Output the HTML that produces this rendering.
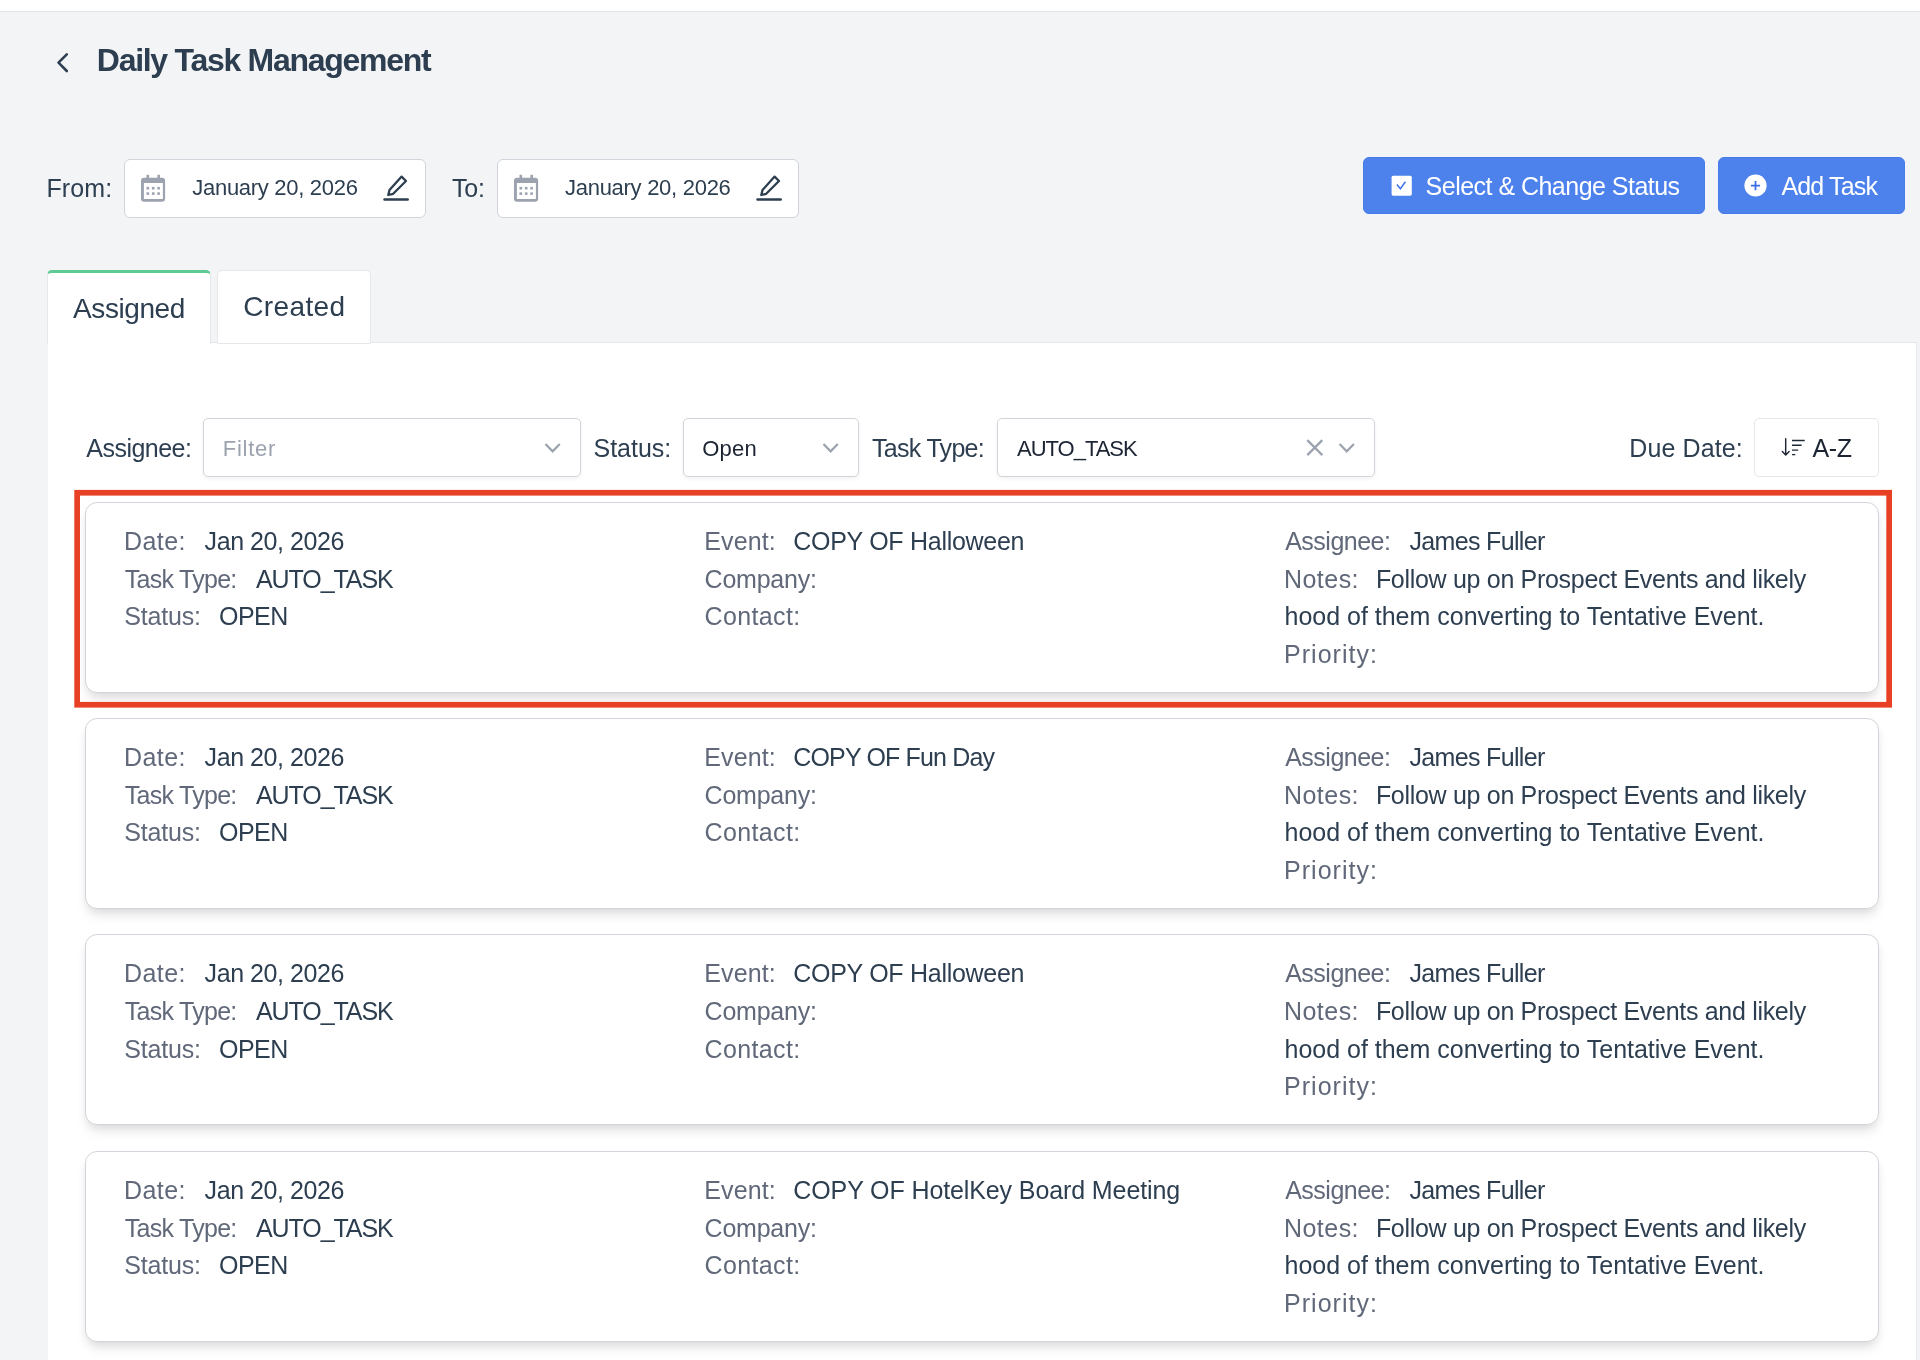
<!DOCTYPE html>
<html>
<head>
<meta charset="utf-8">
<title>Daily Task Management</title>
<style>
*{box-sizing:border-box;margin:0;padding:0}
html,body{width:1920px;height:1360px;overflow:hidden}
body{background:#f3f4f6;font-family:"Liberation Sans",sans-serif;color:#2c3e50;position:relative}
.abs{position:absolute}
svg{position:absolute;left:0;top:0;overflow:visible}
.t{position:absolute;white-space:nowrap;line-height:1}
#txt{position:absolute;left:0;top:0;width:1920px;height:1360px;will-change:transform}
#topbar{left:0;top:0;width:1920px;height:12px;background:#fff;border-bottom:1px solid #e4e4e5}
.datebox{top:159px;width:302px;height:59px;background:#fff;border:1px solid #d1d5db;border-radius:6px}
.btn{top:157px;height:57px;background:#4d82ec;border:1px solid #467cea;border-radius:6px}
.tab{background:#fff;border:1px solid #e5e7eb;border-bottom:none;border-radius:5px 5px 0 0}
#panel{left:48px;top:342px;width:1869px;height:1030px;background:#fff;border:1px solid #e5e7eb;border-left:none}
.sel{top:418px;height:59px;background:#fff;border:1px solid #d1d5db;border-radius:5px;box-shadow:0 2px 4px rgba(0,0,0,0.05)}
.card{left:85px;width:1794px;height:191px;background:#fff;border:1px solid #d1d5db;border-radius:12px;box-shadow:0 8px 12px -2px rgba(0,0,0,0.10),0 4px 8px -2px rgba(0,0,0,0.06)}
</style>
</head>
<body>
<div id="topbar" class="abs"></div>
<div id="panel" class="abs"></div>

<!-- date boxes -->
<div class="abs datebox" style="left:124px"></div>
<div class="abs datebox" style="left:497px"></div>

<!-- buttons -->
<div class="abs btn" style="left:1363px;width:342px"></div>
<div class="abs btn" style="left:1718px;width:187px"></div>

<!-- tabs -->
<div class="abs tab" style="left:47px;top:270px;width:164px;height:74px;border-top:3px solid #5ecb95"></div>
<div class="abs tab" style="left:217px;top:270px;width:154px;height:74px;border-bottom:1px solid #e5e7eb"></div>

<!-- filters -->
<div class="abs sel" style="left:203px;width:378px"></div>
<div class="abs sel" style="left:683px;width:176px"></div>
<div class="abs sel" style="left:997px;width:378px"></div>
<div class="abs sel" style="left:1754px;width:125px;border-color:#e5e7eb;box-shadow:none"></div>

<!-- cards -->
<div class="abs card" style="top:502px"></div>
<div class="abs card" style="top:718px"></div>
<div class="abs card" style="top:934px"></div>
<div class="abs card" style="top:1151px"></div>

<!-- icons -->
<svg width="1920" height="1360" viewBox="0 0 1920 1360">
 <!-- red highlight -->
 <rect x="77.15" y="492.75" width="1812" height="212" fill="none" stroke="#e84024" stroke-width="5.7"/>
 <!-- back chevron -->
 <path d="M66.8 54.4 L58.5 62.7 L66.8 71" fill="none" stroke="#2c3e50" stroke-width="2.6" stroke-linecap="round" stroke-linejoin="round"/>
 <!-- calendar icons -->
 <g fill="#9ca3af">
  <path fill-rule="evenodd" d="M517 177.75 h18.1 a3 3 0 0 1 3 3 v18 a3 3 0 0 1 -3 3 h-18.1 a3 3 0 0 1 -3 -3 v-18 a3 3 0 0 1 3 -3 z M516.9 182.9 v16.2 h19 v-16.2 z"/>
  <rect x="519.5" y="174.8" width="2.6" height="4"/><rect x="530.4" y="174.8" width="2.6" height="4"/>
  <rect x="519.5" y="186.9" width="2.6" height="2.6"/><rect x="524.9" y="186.9" width="2.6" height="2.6"/><rect x="530.3" y="186.9" width="2.6" height="2.6"/>
  <rect x="519.5" y="192.3" width="2.6" height="2.6"/><rect x="524.9" y="192.3" width="2.6" height="2.6"/><rect x="530.3" y="192.3" width="2.6" height="2.6"/>
 </g>
 <g fill="#9ca3af" transform="translate(-373 0)">
  <path fill-rule="evenodd" d="M517 177.75 h18.1 a3 3 0 0 1 3 3 v18 a3 3 0 0 1 -3 3 h-18.1 a3 3 0 0 1 -3 -3 v-18 a3 3 0 0 1 3 -3 z M516.9 182.9 v16.2 h19 v-16.2 z"/>
  <rect x="519.5" y="174.8" width="2.6" height="4"/><rect x="530.4" y="174.8" width="2.6" height="4"/>
  <rect x="519.5" y="186.9" width="2.6" height="2.6"/><rect x="524.9" y="186.9" width="2.6" height="2.6"/><rect x="530.3" y="186.9" width="2.6" height="2.6"/>
  <rect x="519.5" y="192.3" width="2.6" height="2.6"/><rect x="524.9" y="192.3" width="2.6" height="2.6"/><rect x="530.3" y="192.3" width="2.6" height="2.6"/>
 </g>
 <!-- pencil icons -->
 <g fill="none" stroke="#2c3e50" stroke-width="2.3" stroke-linejoin="round" stroke-linecap="round">
  <path d="M774.6 176.6 L779 181 L766.2 193.8 L761.3 195 L762.5 190.1 Z"/>
  <path d="M757.5 199.6 H780.7" stroke-width="2.5"/>
 </g>
 <g fill="none" stroke="#2c3e50" stroke-width="2.3" stroke-linejoin="round" stroke-linecap="round" transform="translate(-373 0)">
  <path d="M774.6 176.6 L779 181 L766.2 193.8 L761.3 195 L762.5 190.1 Z"/>
  <path d="M757.5 199.6 H780.7" stroke-width="2.5"/>
 </g>
 <!-- checkbox icon -->
 <rect x="1391.6" y="175.7" width="20.2" height="20" rx="1.6" fill="#fff"/>
 <path d="M1396.9 184.6 L1400.4 188.7 L1405.4 181.8" fill="none" stroke="#3f74ea" stroke-width="1.5"/>
 <!-- plus circle -->
 <circle cx="1755.5" cy="185.5" r="11.1" fill="#fff"/>
 <path d="M1750.9 185.6 H1760.1 M1755.5 180.9 V190.3" fill="none" stroke="#3b6fe8" stroke-width="1.8"/>
 <!-- select chevrons -->
 <g fill="none" stroke="#9ca3af" stroke-width="2.2">
  <path d="M545.5 443.9 L552.6 451.3 L559.8 443.9"/>
  <path d="M823.5 443.9 L830.6 451.3 L837.8 443.9"/>
  <path d="M1339.6 443.9 L1346.7 451.3 L1353.9 443.9"/>
  <path d="M1307.3 440.1 L1322.3 455.1 M1322.3 440.1 L1307.3 455.1"/>
 </g>
 <!-- sort icon -->
 <g fill="none" stroke="#1f2937" stroke-width="1.45">
  <path d="M1785.7 438.8 V454.8 M1782.3 451.5 L1785.7 455.1 L1789.1 451.5" stroke-linecap="round" stroke-linejoin="round"/>
  <path d="M1792 440.4 H1804.7 M1792 445.2 H1801.6 M1792 450.1 H1798.2 M1792 454.6 H1795.3"/>
 </g>
</svg>

<div id="txt">
<div class="t" id="title" style="left:96.80px;top:43.91px;font-size:32px;letter-spacing:-1.278px;color:#2c3e50;font-weight:bold">Daily Task Management</div>
<div class="t" id="from" style="left:46.40px;top:175.84px;font-size:25px;letter-spacing:0.144px;color:#2c3e50">From:</div>
<div class="t" id="date1" style="left:192.30px;top:177.38px;font-size:22px;letter-spacing:-0.292px;color:#2c3e50">January 20, 2026</div>
<div class="t" id="to" style="left:451.90px;top:175.84px;font-size:25px;letter-spacing:-0.102px;color:#2c3e50">To:</div>
<div class="t" id="date2" style="left:565.00px;top:177.38px;font-size:22px;letter-spacing:-0.279px;color:#2c3e50">January 20, 2026</div>
<div class="t" id="btn1" style="left:1425.60px;top:173.74px;font-size:25px;letter-spacing:-0.521px;color:#fff">Select &amp; Change Status</div>
<div class="t" id="btn2" style="left:1781.40px;top:173.74px;font-size:25px;letter-spacing:-0.819px;color:#fff">Add Task</div>
<div class="t" id="tab1" style="left:73.10px;top:295.05px;font-size:28px;letter-spacing:-0.423px;color:#2c3e50">Assigned</div>
<div class="t" id="tab2" style="left:243.20px;top:293.00px;font-size:28px;letter-spacing:0.376px;color:#2c3e50">Created</div>
<div class="t" id="fassignee" style="left:86.25px;top:435.84px;font-size:25px;letter-spacing:-0.512px;color:#2c3e50">Assignee:</div>
<div class="t" id="ffilter" style="left:222.75px;top:437.63px;font-size:22px;letter-spacing:0.738px;color:#9ca3af">Filter</div>
<div class="t" id="fstatus" style="left:593.50px;top:435.84px;font-size:25px;letter-spacing:-0.021px;color:#2c3e50">Status:</div>
<div class="t" id="fopen" style="left:702.25px;top:437.63px;font-size:22px;letter-spacing:0.222px;color:#1c2434">Open</div>
<div class="t" id="ftasktype" style="left:872.00px;top:435.84px;font-size:25px;letter-spacing:-0.700px;color:#2c3e50">Task Type:</div>
<div class="t" id="fauto" style="left:1017.00px;top:437.63px;font-size:22px;letter-spacing:-1.013px;color:#1c2434">AUTO_TASK</div>
<div class="t" id="fdue" style="left:1629.30px;top:435.84px;font-size:25px;letter-spacing:0.111px;color:#2c3e50">Due Date:</div>
<div class="t" id="faz" style="left:1812.50px;top:435.84px;font-size:25px;letter-spacing:-0.400px;color:#1c2434">A-Z</div>
<div class="t" id="c1l1" style="left:124.00px;top:528.84px;font-size:25px;letter-spacing:0.423px;color:#606879">Date:</div>
<div class="t" id="c1v1" style="left:204.60px;top:528.84px;font-size:25px;letter-spacing:-0.433px;color:#2c3e50">Jan 20, 2026</div>
<div class="t" id="c1l2" style="left:124.80px;top:566.84px;font-size:25px;letter-spacing:-0.728px;color:#606879">Task Type:</div>
<div class="t" id="c1v2" style="left:256.00px;top:566.84px;font-size:25px;letter-spacing:-1.083px;color:#2c3e50">AUTO_TASK</div>
<div class="t" id="c1l3" style="left:124.30px;top:604.24px;font-size:25px;letter-spacing:-0.196px;color:#606879">Status:</div>
<div class="t" id="c1v3" style="left:219.00px;top:604.24px;font-size:25px;letter-spacing:-0.498px;color:#2c3e50">OPEN</div>
<div class="t" id="c1l4" style="left:704.25px;top:528.84px;font-size:25px;letter-spacing:0.114px;color:#606879">Event:</div>
<div class="t" id="c1v4" style="left:793.30px;top:528.84px;font-size:25px;letter-spacing:-0.287px;color:#2c3e50">COPY OF Halloween</div>
<div class="t" id="c1l5" style="left:704.60px;top:566.84px;font-size:25px;letter-spacing:-0.228px;color:#606879">Company:</div>
<div class="t" id="c1l6" style="left:704.60px;top:604.24px;font-size:25px;letter-spacing:0.363px;color:#606879">Contact:</div>
<div class="t" id="c1l7" style="left:1285.20px;top:528.84px;font-size:25px;letter-spacing:-0.506px;color:#606879">Assignee:</div>
<div class="t" id="c1v7" style="left:1409.40px;top:528.84px;font-size:25px;letter-spacing:-0.651px;color:#2c3e50">James Fuller</div>
<div class="t" id="c1l8" style="left:1284.00px;top:566.84px;font-size:25px;letter-spacing:0.458px;color:#606879">Notes:</div>
<div class="t" id="c1v8" style="left:1375.90px;top:566.84px;font-size:25px;letter-spacing:-0.305px;color:#2c3e50">Follow up on Prospect Events and likely</div>
<div class="t" id="c1v9" style="left:1284.50px;top:604.24px;font-size:25px;letter-spacing:-0.010px;color:#2c3e50">hood of them converting to Tentative Event.</div>
<div class="t" id="c1l10" style="left:1284.00px;top:641.84px;font-size:25px;letter-spacing:1.027px;color:#606879">Priority:</div>
<div class="t" id="c2l1" style="left:124.00px;top:745.04px;font-size:25px;letter-spacing:0.423px;color:#606879">Date:</div>
<div class="t" id="c2v1" style="left:204.60px;top:745.04px;font-size:25px;letter-spacing:-0.433px;color:#2c3e50">Jan 20, 2026</div>
<div class="t" id="c2l2" style="left:124.80px;top:783.04px;font-size:25px;letter-spacing:-0.728px;color:#606879">Task Type:</div>
<div class="t" id="c2v2" style="left:256.00px;top:783.04px;font-size:25px;letter-spacing:-1.083px;color:#2c3e50">AUTO_TASK</div>
<div class="t" id="c2l3" style="left:124.30px;top:820.44px;font-size:25px;letter-spacing:-0.196px;color:#606879">Status:</div>
<div class="t" id="c2v3" style="left:219.00px;top:820.44px;font-size:25px;letter-spacing:-0.498px;color:#2c3e50">OPEN</div>
<div class="t" id="c2l4" style="left:704.25px;top:745.04px;font-size:25px;letter-spacing:0.114px;color:#606879">Event:</div>
<div class="t" id="c2v4" style="left:793.30px;top:745.04px;font-size:25px;letter-spacing:-0.839px;color:#2c3e50">COPY OF Fun Day</div>
<div class="t" id="c2l5" style="left:704.60px;top:783.04px;font-size:25px;letter-spacing:-0.228px;color:#606879">Company:</div>
<div class="t" id="c2l6" style="left:704.60px;top:820.44px;font-size:25px;letter-spacing:0.363px;color:#606879">Contact:</div>
<div class="t" id="c2l7" style="left:1285.20px;top:745.04px;font-size:25px;letter-spacing:-0.506px;color:#606879">Assignee:</div>
<div class="t" id="c2v7" style="left:1409.40px;top:745.04px;font-size:25px;letter-spacing:-0.651px;color:#2c3e50">James Fuller</div>
<div class="t" id="c2l8" style="left:1284.00px;top:783.04px;font-size:25px;letter-spacing:0.458px;color:#606879">Notes:</div>
<div class="t" id="c2v8" style="left:1375.90px;top:783.04px;font-size:25px;letter-spacing:-0.305px;color:#2c3e50">Follow up on Prospect Events and likely</div>
<div class="t" id="c2v9" style="left:1284.50px;top:820.44px;font-size:25px;letter-spacing:-0.010px;color:#2c3e50">hood of them converting to Tentative Event.</div>
<div class="t" id="c2l10" style="left:1284.00px;top:858.04px;font-size:25px;letter-spacing:1.027px;color:#606879">Priority:</div>
<div class="t" id="c3l1" style="left:124.00px;top:961.14px;font-size:25px;letter-spacing:0.423px;color:#606879">Date:</div>
<div class="t" id="c3v1" style="left:204.60px;top:961.14px;font-size:25px;letter-spacing:-0.433px;color:#2c3e50">Jan 20, 2026</div>
<div class="t" id="c3l2" style="left:124.80px;top:999.14px;font-size:25px;letter-spacing:-0.728px;color:#606879">Task Type:</div>
<div class="t" id="c3v2" style="left:256.00px;top:999.14px;font-size:25px;letter-spacing:-1.083px;color:#2c3e50">AUTO_TASK</div>
<div class="t" id="c3l3" style="left:124.30px;top:1036.54px;font-size:25px;letter-spacing:-0.196px;color:#606879">Status:</div>
<div class="t" id="c3v3" style="left:219.00px;top:1036.54px;font-size:25px;letter-spacing:-0.498px;color:#2c3e50">OPEN</div>
<div class="t" id="c3l4" style="left:704.25px;top:961.14px;font-size:25px;letter-spacing:0.114px;color:#606879">Event:</div>
<div class="t" id="c3v4" style="left:793.30px;top:961.14px;font-size:25px;letter-spacing:-0.287px;color:#2c3e50">COPY OF Halloween</div>
<div class="t" id="c3l5" style="left:704.60px;top:999.14px;font-size:25px;letter-spacing:-0.228px;color:#606879">Company:</div>
<div class="t" id="c3l6" style="left:704.60px;top:1036.54px;font-size:25px;letter-spacing:0.363px;color:#606879">Contact:</div>
<div class="t" id="c3l7" style="left:1285.20px;top:961.14px;font-size:25px;letter-spacing:-0.506px;color:#606879">Assignee:</div>
<div class="t" id="c3v7" style="left:1409.40px;top:961.14px;font-size:25px;letter-spacing:-0.651px;color:#2c3e50">James Fuller</div>
<div class="t" id="c3l8" style="left:1284.00px;top:999.14px;font-size:25px;letter-spacing:0.458px;color:#606879">Notes:</div>
<div class="t" id="c3v8" style="left:1375.90px;top:999.14px;font-size:25px;letter-spacing:-0.305px;color:#2c3e50">Follow up on Prospect Events and likely</div>
<div class="t" id="c3v9" style="left:1284.50px;top:1036.54px;font-size:25px;letter-spacing:-0.010px;color:#2c3e50">hood of them converting to Tentative Event.</div>
<div class="t" id="c3l10" style="left:1284.00px;top:1074.14px;font-size:25px;letter-spacing:1.027px;color:#606879">Priority:</div>
<div class="t" id="c4l1" style="left:124.00px;top:1177.84px;font-size:25px;letter-spacing:0.423px;color:#606879">Date:</div>
<div class="t" id="c4v1" style="left:204.60px;top:1177.84px;font-size:25px;letter-spacing:-0.433px;color:#2c3e50">Jan 20, 2026</div>
<div class="t" id="c4l2" style="left:124.80px;top:1215.84px;font-size:25px;letter-spacing:-0.728px;color:#606879">Task Type:</div>
<div class="t" id="c4v2" style="left:256.00px;top:1215.84px;font-size:25px;letter-spacing:-1.083px;color:#2c3e50">AUTO_TASK</div>
<div class="t" id="c4l3" style="left:124.30px;top:1253.24px;font-size:25px;letter-spacing:-0.196px;color:#606879">Status:</div>
<div class="t" id="c4v3" style="left:219.00px;top:1253.24px;font-size:25px;letter-spacing:-0.498px;color:#2c3e50">OPEN</div>
<div class="t" id="c4l4" style="left:704.25px;top:1177.84px;font-size:25px;letter-spacing:0.114px;color:#606879">Event:</div>
<div class="t" id="c4v4" style="left:793.30px;top:1177.84px;font-size:25px;letter-spacing:-0.108px;color:#2c3e50">COPY OF HotelKey Board Meeting</div>
<div class="t" id="c4l5" style="left:704.60px;top:1215.84px;font-size:25px;letter-spacing:-0.228px;color:#606879">Company:</div>
<div class="t" id="c4l6" style="left:704.60px;top:1253.24px;font-size:25px;letter-spacing:0.363px;color:#606879">Contact:</div>
<div class="t" id="c4l7" style="left:1285.20px;top:1177.84px;font-size:25px;letter-spacing:-0.506px;color:#606879">Assignee:</div>
<div class="t" id="c4v7" style="left:1409.40px;top:1177.84px;font-size:25px;letter-spacing:-0.651px;color:#2c3e50">James Fuller</div>
<div class="t" id="c4l8" style="left:1284.00px;top:1215.84px;font-size:25px;letter-spacing:0.458px;color:#606879">Notes:</div>
<div class="t" id="c4v8" style="left:1375.90px;top:1215.84px;font-size:25px;letter-spacing:-0.305px;color:#2c3e50">Follow up on Prospect Events and likely</div>
<div class="t" id="c4v9" style="left:1284.50px;top:1253.24px;font-size:25px;letter-spacing:-0.010px;color:#2c3e50">hood of them converting to Tentative Event.</div>
<div class="t" id="c4l10" style="left:1284.00px;top:1290.84px;font-size:25px;letter-spacing:1.027px;color:#606879">Priority:</div>
</div>
</body>
</html>
